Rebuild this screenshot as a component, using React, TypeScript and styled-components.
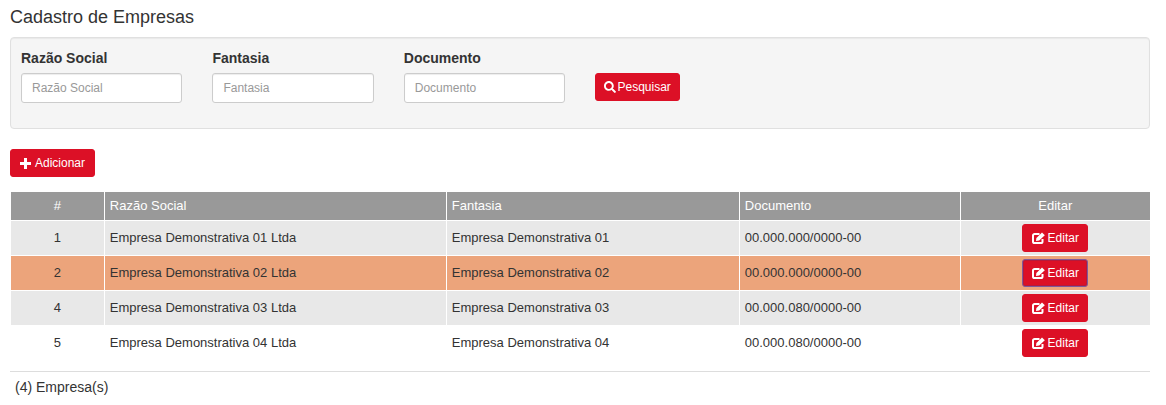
import React from 'react';
import styled, { createGlobalStyle } from 'styled-components';
import { FaSearch } from 'react-icons/fa';

const GlobalStyle = createGlobalStyle`
  * { box-sizing: border-box; }
  body {
    margin: 0;
    background: #fff;
    color: #333;
    font-family: "Liberation Sans", Arial, sans-serif;
    font-size: 13px;
  }
`;

const Page = styled.div`
  padding: 7px 16px 0 10px;
`;

const Title = styled.h3`
  margin: 0 0 10px;
  font-size: 18px;
  font-weight: 400;
  line-height: 20px;
  color: #333;
`;

const Well = styled.div`
  height: 92px;
  padding: 11px 10px 0;
  background: #f5f5f5;
  border: 1px solid #e0e0e0;
  border-radius: 4px;
  box-shadow: inset 0 1px 1px rgba(0, 0, 0, 0.05);
  display: flex;
  align-items: flex-start;
`;

const Field = styled.div`
  width: 191.4px;
`;

const Label = styled.label`
  display: block;
  margin-bottom: 6px;
  font-size: 14px;
  line-height: 18px;
  font-weight: 700;
  color: #333;
`;

const Input = styled.input`
  display: block;
  width: 161.4px;
  height: 30px;
  padding: 0 10px;
  font: 12px "Liberation Sans", Arial, sans-serif;
  color: #555;
  background: #fff;
  border: 1px solid #ccc;
  border-radius: 3px;
  box-shadow: inset 0 1px 1px rgba(0, 0, 0, 0.075);
  &::placeholder {
    color: #999;
    opacity: 1;
  }
`;

const Button = styled.button<{ $focused?: boolean }>`
  display: inline-flex;
  align-items: center;
  justify-content: center;
  height: 28px;
  padding: 0 9px;
  font: 12px "Liberation Sans", Arial, sans-serif;
  color: #fff;
  background: #dc1026;
  border: 1px solid ${(p) => (p.$focused ? '#7d5a9e' : '#dc1026')};
  border-radius: 3px;
  box-shadow: ${(p) => (p.$focused ? 'inset 0 0 0 1px #b51a3c' : 'none')};
  svg {
    flex: none;
  }
`;

const SearchButton = styled(Button)`
  width: 85px;
  margin: 24px 0 0 0;
  gap: 1px;
  svg {
    width: 12px;
    height: 12px;
  }
`;

const AddButton = styled(Button)`
  width: 85px;
  margin-top: 20px;
  gap: 4px;
`;

const EditButton = styled(Button)`
  width: 66px;
  gap: 3px;
`;

const Table = styled.table`
  width: 1139px;
  margin: 15px 0 0 1px;
  border-collapse: collapse;
  table-layout: fixed;
`;

const HeadCell = styled.th<{ $center?: boolean }>`
  height: 28px;
  padding: 0 5.3px;
  font-size: 13px;
  font-weight: 400;
  color: #fff;
  background: #999;
  border-right: 1px solid #fff;
  border-bottom: 1px solid #fff;
  text-align: ${(p) => (p.$center ? 'center' : 'left')};
  &:last-child {
    border-right: 0;
  }
`;

const Row = styled.tr<{ $tone: 'gray' | 'orange' | 'white' }>`
  background: ${(p) =>
    p.$tone === 'gray' ? '#e8e8e8' : p.$tone === 'orange' ? '#eca47b' : '#fff'};
`;

const Cell = styled.td<{ $center?: boolean }>`
  height: 35px;
  padding: 0 5.3px;
  font-size: 13px;
  color: #333;
  border-right: 1px solid #fff;
  border-bottom: 1px solid #fff;
  text-align: ${(p) => (p.$center ? 'center' : 'left')};
  &:last-child {
    border-right: 0;
  }
`;

const Rule = styled.hr`
  margin: 10px 0 0;
  width: 1140px;
  border: 0;
  border-top: 1px solid #ddd;
`;

const Footer = styled.div`
  margin: 7px 0 0 5px;
  line-height: 16px;
  font-size: 14px;
`;

const PlusIcon = () => (
  <svg width="11" height="11" viewBox="0 0 11 11" fill="currentColor">
    <path d="M4 0h3v4h4v3H7v4H4V7H0V4h4z" />
  </svg>
);

const EditIcon = () => (
  <svg width="13" height="12" viewBox="0 0 13 12" fill="none" stroke="currentColor">
    <path d="M7.5 2H2.6A1.6 1.6 0 0 0 1 3.6v5.8A1.6 1.6 0 0 0 2.6 11h6.3a1.6 1.6 0 0 0 1.6-1.6V7" strokeWidth="2" />
    <path d="M4 9l.4-3L10 .4 12.8 3.2 7.2 8.6z" fill="currentColor" stroke="none" />
  </svg>
);

const companies = [
  { id: 1, name: '01', doc: '00.000.000/0000-00', tone: 'gray' as const },
  { id: 2, name: '02', doc: '00.000.000/0000-00', tone: 'orange' as const, focused: true },
  { id: 4, name: '03', doc: '00.000.080/0000-00', tone: 'gray' as const },
  { id: 5, name: '04', doc: '00.000.080/0000-00', tone: 'white' as const },
];

const fields = ['Razão Social', 'Fantasia', 'Documento'];

export default function App() {
  return (
    <Page>
      <GlobalStyle />
      <Title>Cadastro de Empresas</Title>
      <Well>
        {fields.map((f) => (
          <Field key={f}>
            <Label>{f}</Label>
            <Input placeholder={f} />
          </Field>
        ))}
        <SearchButton>
          <FaSearch />
          Pesquisar
        </SearchButton>
      </Well>
      <AddButton>
        <PlusIcon />
        Adicionar
      </AddButton>
      <Table>
        <colgroup>
          <col style={{ width: 93 }} />
          <col style={{ width: 342 }} />
          <col style={{ width: 293 }} />
          <col style={{ width: 221 }} />
          <col style={{ width: 190 }} />
        </colgroup>
        <thead>
          <tr>
            <HeadCell $center>#</HeadCell>
            <HeadCell>Razão Social</HeadCell>
            <HeadCell>Fantasia</HeadCell>
            <HeadCell>Documento</HeadCell>
            <HeadCell $center>Editar</HeadCell>
          </tr>
        </thead>
        <tbody>
          {companies.map((c) => (
            <Row key={c.id} $tone={c.tone}>
              <Cell $center>{c.id}</Cell>
              <Cell>Empresa Demonstrativa {c.name} Ltda</Cell>
              <Cell>Empresa Demonstrativa {c.name}</Cell>
              <Cell>{c.doc}</Cell>
              <Cell $center>
                <EditButton $focused={c.focused}>
                  <EditIcon />
                  Editar
                </EditButton>
              </Cell>
            </Row>
          ))}
        </tbody>
      </Table>
      <Rule />
      <Footer>(4) Empresa(s)</Footer>
    </Page>
  );
}
